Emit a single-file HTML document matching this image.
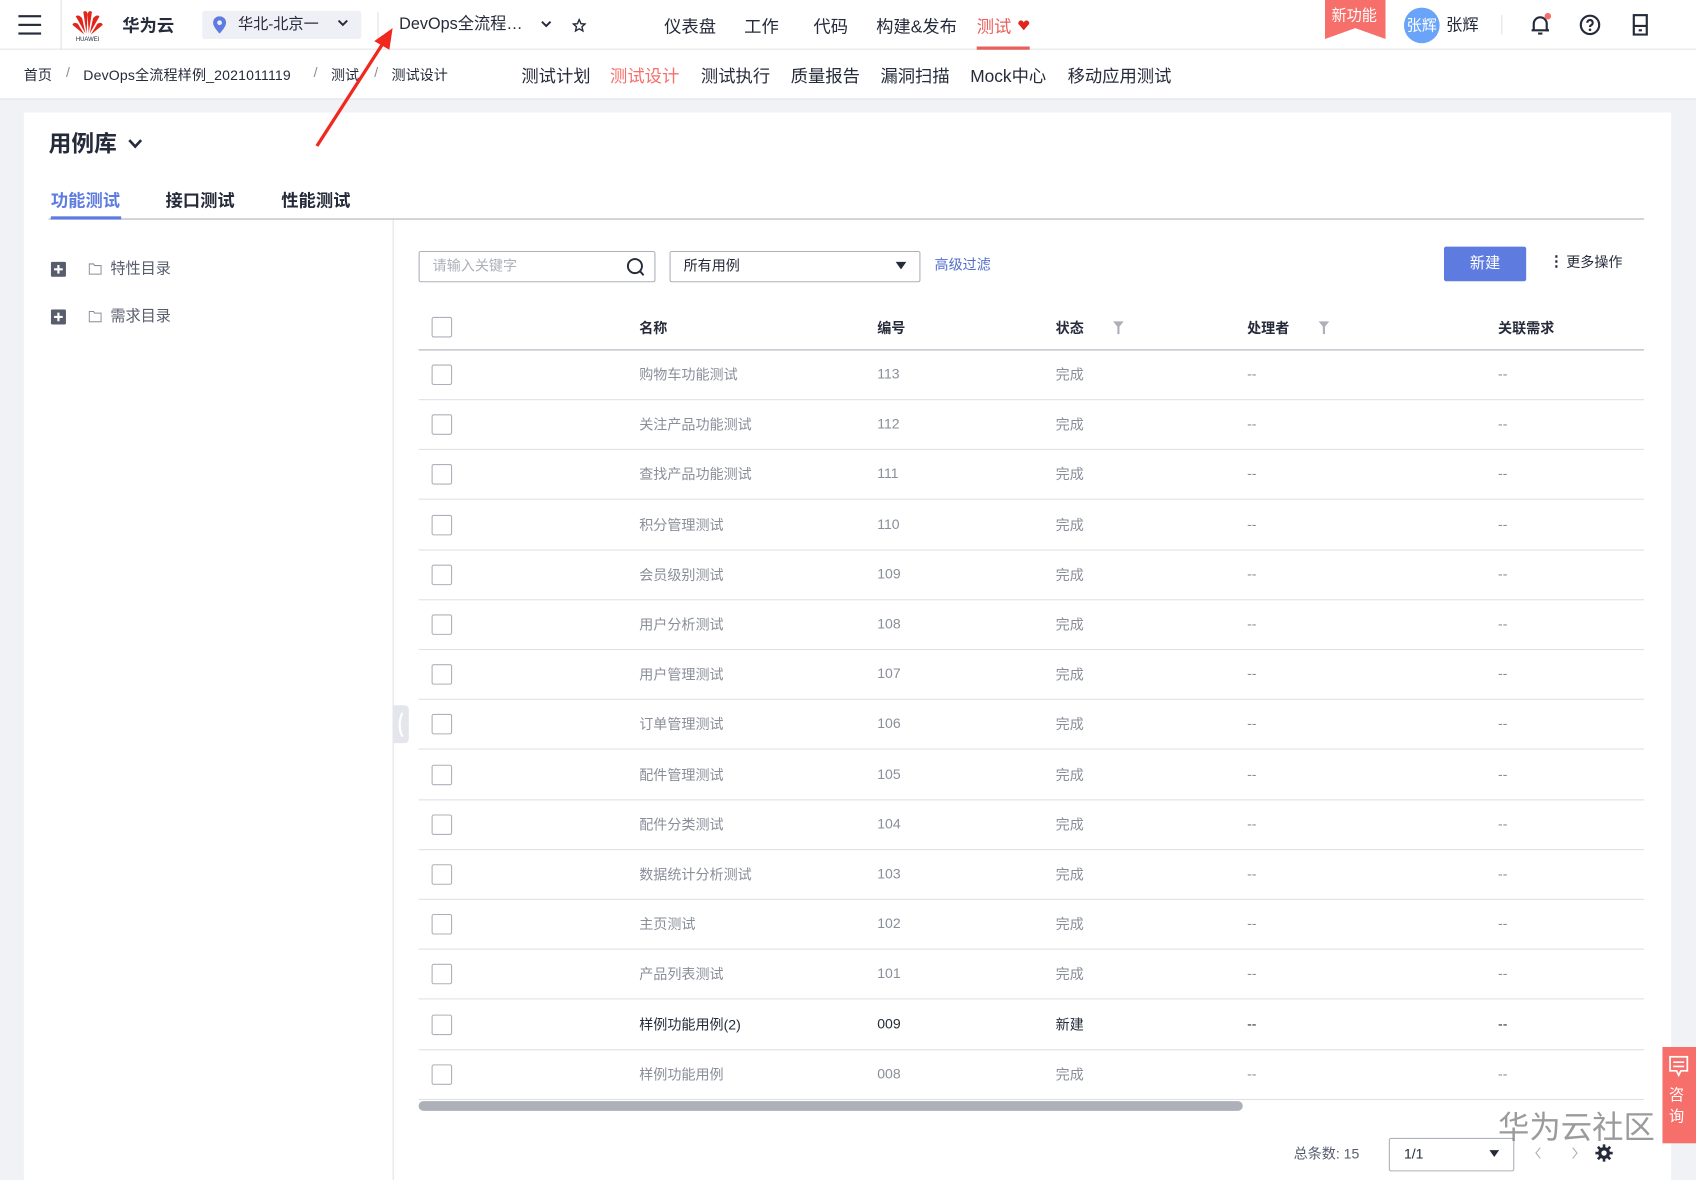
<!DOCTYPE html>
<html><head><meta charset="utf-8">
<style>
*{box-sizing:border-box;margin:0;padding:0}
html,body{width:1696px;height:1180px;overflow:hidden;background:#f0f2f5}
body{font-family:"Liberation Sans","Noto Sans CJK SC",sans-serif;color:#252b3a}
#w{position:absolute;left:0;top:0;width:1568px;height:1091px;transform:scale(1.08163);transform-origin:0 0;background:#f0f2f5;overflow:hidden}
.a{position:absolute;white-space:nowrap}
.top{position:absolute;left:0;top:0;width:1568px;height:46px;background:#fff;border-bottom:1px solid #dfe1e6}
.sub{position:absolute;left:0;top:46px;width:1568px;height:46px;background:#fff;border-bottom:1px solid #dfe1e6}
.card{position:absolute;left:22px;top:104px;width:1523px;height:1000px;background:#fff}
.nav{font-size:16px;color:#252b3a;top:11px}
.sn{font-size:16px;top:57px;color:#252b3a}
.bc{font-size:13px;top:59px;color:#252b3a}
.cb{position:absolute;left:399px;width:19px;height:19px;border:1px solid #adb0b8;border-radius:2px;background:#fff}
.row{position:absolute;left:387px;width:1133px;height:1px;background:#dfe1e6}
.c{position:absolute;font-size:13px;color:#8a8e99}
.h{position:absolute;font-size:13px;color:#252b3a;font-weight:bold;top:293px}
</style></head><body><div id="w">
<div class="top"></div>
<div class="sub"></div>
<div class="a" style="left:17px;top:14px;width:21px;height:2px;background:#252b3a"></div>
<div class="a" style="left:17px;top:22px;width:21px;height:2px;background:#252b3a"></div>
<div class="a" style="left:17px;top:30px;width:21px;height:2px;background:#252b3a"></div>
<div class="a" style="left:56px;top:0;width:1px;height:46px;background:#dfe1e6"></div>
<svg class="a" style="left:64px;top:5px" width="34" height="34" viewBox="0 0 34 34">
<g fill="#e1251b">
<path d="M16 26 L13 6 Q16 4 17 8 Z"/><path d="M18 26 L21 6 Q18 4 17 8 Z"/>
<path d="M15 26 L6 10 Q9 8 12 12 Z"/><path d="M19 26 L28 10 Q25 8 22 12 Z"/>
<path d="M14 27 L3 18 Q4 15 8 17 Z"/><path d="M20 27 L31 18 Q30 15 26 17 Z"/>
</g>
<text x="17" y="33" font-size="5.5" text-anchor="middle" fill="#252b3a" font-family="Liberation Sans">HUAWEI</text>
</svg>
<div class="a" style="left:113px;top:10px;font-size:16px;font-weight:bold">华为云</div>
<div class="a" style="left:187px;top:10px;width:147px;height:26px;background:#eef0f5;border-radius:2px"></div>
<svg class="a" style="left:197px;top:15px" width="12" height="16" viewBox="0 0 12 16"><path d="M6 0a6 6 0 0 0-6 6c0 4 6 10 6 10s6-6 6-10a6 6 0 0 0-6-6z" fill="#5e7ce0"/><circle cx="6" cy="6" r="2.2" fill="#eef0f5"/></svg>
<div class="a" style="left:220px;top:12px;font-size:14px">华北-北京一</div>
<svg class="a" style="left:312px;top:18px" width="10" height="8" viewBox="0 0 10 8"><path d="M1 1l4 4 4-4" stroke="#252b3a" stroke-width="1.8" fill="none"/></svg>
<div class="a" style="left:349px;top:11px;width:1px;height:24px;background:#dfe1e6"></div>
<div class="a" style="left:369px;top:11px;font-size:15px">DevOps全流程…</div>
<svg class="a" style="left:500px;top:19px" width="10" height="8" viewBox="0 0 10 8"><path d="M1 1l4 4 4-4" stroke="#252b3a" stroke-width="1.8" fill="none"/></svg>
<svg class="a" style="left:529px;top:17px" width="13" height="13" viewBox="0 0 24 24"><path d="M12 2l3 7 7 .6-5.3 4.7 1.6 7.2L12 17.8 5.7 21.5l1.6-7.2L2 9.6 9 9z" fill="none" stroke="#252b3a" stroke-width="2.4"/></svg>
<div class="a nav" style="left:614px">仪表盘</div>
<div class="a nav" style="left:688px">工作</div>
<div class="a nav" style="left:752px">代码</div>
<div class="a nav" style="left:810px">构建&amp;发布</div>
<div class="a nav" style="left:903px;color:#e8605a">测试</div>
<svg class="a" style="left:941px;top:19px" width="11" height="9" viewBox="0 0 12 10"><path d="M6 10L0.5 3.5A2.6 2.6 0 0 1 6 2a2.6 2.6 0 0 1 5.5 1.5z" fill="#e1251b"/></svg>
<div class="a" style="left:903px;top:43px;width:49px;height:3px;background:#e8605a"></div>
<svg class="a" style="left:1225px;top:0" width="56" height="36" viewBox="0 0 56 36"><path d="M0 0H56V36L28 26L0 36Z" fill="#f66f6a"/></svg>
<div class="a" style="left:1231px;top:4px;font-size:14px;color:#fff">新功能</div>
<div class="a" style="left:1298px;top:7px;width:33px;height:33px;border-radius:50%;background:#6aa4f8;color:#fff;font-size:14px;line-height:33px;text-align:center">张辉</div>
<div class="a" style="left:1337px;top:12px;font-size:15px">张辉</div>
<div class="a" style="left:1388px;top:14px;width:1px;height:18px;background:#dfe1e6"></div>
<svg class="a" style="left:1413px;top:12px" width="22" height="22" viewBox="0 0 22 22"><path d="M5 16V10a6 6 0 0 1 12 0v6h2" fill="none" stroke="#252b3a" stroke-width="2"/><path d="M3 16h16" stroke="#252b3a" stroke-width="2"/><path d="M9 19h4" stroke="#252b3a" stroke-width="2"/><circle cx="18" cy="3" r="3" fill="#f66f6a"/></svg>
<svg class="a" style="left:1460px;top:13px" width="20" height="20" viewBox="0 0 20 20"><circle cx="10" cy="10" r="8.5" fill="none" stroke="#252b3a" stroke-width="2"/><path d="M7.5 8a2.5 2.5 0 1 1 3.5 2.3c-.8.4-1 .9-1 1.7" fill="none" stroke="#252b3a" stroke-width="2"/><circle cx="10" cy="14.5" r="1.2" fill="#252b3a"/></svg>
<svg class="a" style="left:1509px;top:13px" width="15" height="20" viewBox="0 0 15 20"><rect x="1.5" y="1" width="12" height="18" fill="none" stroke="#252b3a" stroke-width="2"/><path d="M1.5 11h12" stroke="#252b3a" stroke-width="2"/><path d="M6 15h3" stroke="#252b3a" stroke-width="2"/></svg>
<div class="a bc" style="left:22px">首页</div>
<div class="a bc" style="left:61px;color:#8a8e99">/</div>
<div class="a bc" style="left:77px;letter-spacing:.15px">DevOps全流程样例_2021011119</div>
<div class="a bc" style="left:290px;color:#8a8e99">/</div>
<div class="a bc" style="left:306px">测试</div>
<div class="a bc" style="left:346px;color:#8a8e99">/</div>
<div class="a bc" style="left:362px">测试设计</div>
<div class="a sn" style="left:482px">测试计划</div>
<div class="a sn" style="left:564px;color:#f66f6a">测试设计</div>
<div class="a sn" style="left:648px">测试执行</div>
<div class="a sn" style="left:731px">质量报告</div>
<div class="a sn" style="left:814px">漏洞扫描</div>
<div class="a sn" style="left:897px">Mock中心</div>
<div class="a sn" style="left:987px">移动应用测试</div>
<div class="card"></div>
<div class="a" style="left:45px;top:117px;font-size:21px;font-weight:bold">用例库</div>
<svg class="a" style="left:118px;top:128px" width="14" height="10" viewBox="0 0 14 10"><path d="M1.5 1.5l5.5 6 5.5-6" stroke="#252b3a" stroke-width="2.4" fill="none"/></svg>
<div class="a" style="left:47px;top:172px;font-size:16px;font-weight:bold;color:#5e7ce0">功能测试</div>
<div class="a" style="left:153px;top:172px;font-size:16px;font-weight:bold">接口测试</div>
<div class="a" style="left:260px;top:172px;font-size:16px;font-weight:bold">性能测试</div>
<div class="a" style="left:45px;top:202px;width:1475px;height:1px;background:#adb0b8"></div>
<div class="a" style="left:47px;top:200px;width:65px;height:3px;background:#5e7ce0"></div>
<div class="a" style="left:363px;top:203px;width:1px;height:900px;background:#dfe1e6"></div>
<svg class="a" style="left:47px;top:242px" width="14" height="14" viewBox="0 0 14 14"><rect width="14" height="14" rx="1.5" fill="#575d6c"/><path d="M7 3v8M3 7h8" stroke="#fff" stroke-width="2"/></svg>
<svg class="a" style="left:82px;top:243px" width="12" height="11" viewBox="0 0 12 11"><path d="M.5 1h4l1 1.5h6v8h-11z" fill="none" stroke="#8a8e99"/></svg>
<div class="a" style="left:102px;top:238px;font-size:14px;color:#575d6c">特性目录</div>
<svg class="a" style="left:47px;top:286px" width="14" height="14" viewBox="0 0 14 14"><rect width="14" height="14" rx="1.5" fill="#575d6c"/><path d="M7 3v8M3 7h8" stroke="#fff" stroke-width="2"/></svg>
<svg class="a" style="left:82px;top:287px" width="12" height="11" viewBox="0 0 12 11"><path d="M.5 1h4l1 1.5h6v8h-11z" fill="none" stroke="#8a8e99"/></svg>
<div class="a" style="left:102px;top:282px;font-size:14px;color:#575d6c">需求目录</div>
<div class="a" style="left:363px;top:652px;width:15px;height:35px;background:#e4e6eb;border-radius:0 4px 4px 0"></div>
<svg class="a" style="left:366px;top:658px" width="8" height="24" viewBox="0 0 8 24"><path d="M6 1Q1 12 6 23" stroke="#fff" stroke-width="2" fill="none"/></svg>
<div class="a" style="left:387px;top:232px;width:219px;height:29px;border:1px solid #adb0b8;border-radius:2px"></div>
<div class="a" style="left:400px;top:235px;font-size:13px;color:#adb0b8">请输入关键字</div>
<svg class="a" style="left:579px;top:238px" width="17" height="18" viewBox="0 0 17 18"><circle cx="8" cy="8" r="6.5" fill="none" stroke="#252b3a" stroke-width="1.8"/><path d="M12.5 12.5l3.5 4" stroke="#252b3a" stroke-width="1.8"/></svg>
<div class="a" style="left:619px;top:232px;width:232px;height:29px;border:1px solid #adb0b8;border-radius:2px"></div>
<div class="a" style="left:632px;top:235px;font-size:13px">所有用例</div>
<svg class="a" style="left:828px;top:242px" width="10" height="7" viewBox="0 0 10 7"><path d="M0 0h10L5 7z" fill="#252b3a"/></svg>
<div class="a" style="left:864px;top:234px;font-size:13px;color:#526ecc">高级过滤</div>
<div class="a" style="left:1335px;top:228px;width:76px;height:32px;background:#5e7ce0;border-radius:2px;color:#fff;font-size:14px;line-height:30px;text-align:center">新建</div>
<div class="a" style="left:1432px;top:233px;font-size:14px;font-weight:bold">⋮</div>
<div class="a" style="left:1448px;top:232px;font-size:13px">更多操作</div>
<div class="cb" style="top:293px"></div>
<div class="h" style="left:591px">名称</div>
<div class="h" style="left:811px">编号</div>
<div class="h" style="left:976px">状态</div>
<svg class="a" style="left:1029px;top:297px" width="10" height="12" viewBox="0 0 10 12"><path d="M0 0h10L6 5v7H4V5z" fill="#adb0b8"/></svg>
<div class="h" style="left:1153px">处理者</div>
<svg class="a" style="left:1219px;top:297px" width="10" height="12" viewBox="0 0 10 12"><path d="M0 0h10L6 5v7H4V5z" fill="#adb0b8"/></svg>
<div class="h" style="left:1385px">关联需求</div>
<div class="row" style="top:323px;background:#adb0b8"></div>
<div id="rows"></div>
<script>
var d=[["购物车功能测试","113"],["关注产品功能测试","112"],["查找产品功能测试","111"],["积分管理测试","110"],["会员级别测试","109"],["用户分析测试","108"],["用户管理测试","107"],["订单管理测试","106"],["配件管理测试","105"],["配件分类测试","104"],["数据统计分析测试","103"],["主页测试","102"],["产品列表测试","101"],["样例功能用例(2)","009","新建"],["样例功能用例","008"]];
var h="";
d.forEach(function(r,i){var y=323+i*46.2;var dark=r[2];var st=dark?"color:#252b3a":"";
h+='<div class="cb" style="top:'+(y+14)+'px"></div>';
h+='<div class="c" style="left:591px;top:'+(y+13)+'px;'+st+'">'+r[0]+'</div>';
h+='<div class="c" style="left:811px;top:'+(y+15)+'px;'+st+'">'+r[1]+'</div>';
h+='<div class="c" style="left:976px;top:'+(y+13)+'px;'+st+'">'+(r[2]||"完成")+'</div>';
h+='<div class="c" style="left:1153px;top:'+(y+15)+'px;'+st+'">--</div>';
h+='<div class="c" style="left:1385px;top:'+(y+15)+'px;'+st+'">--</div>';
h+='<div class="row" style="top:'+(y+46)+'px"></div>';});
document.getElementById("rows").innerHTML=h;
</script>
<div class="a" style="left:387px;top:1018px;width:762px;height:9px;background:#adb0b8;border-radius:5px"></div>
<div class="a" style="left:1196px;top:1056px;font-size:13px;color:#575d6c">总条数: 15</div>
<div class="a" style="left:1284px;top:1052px;width:116px;height:31px;border:1px solid #adb0b8;border-radius:2px"></div>
<div class="a" style="left:1298px;top:1059px;font-size:13px">1/1</div>
<svg class="a" style="left:1377px;top:1063px" width="9" height="7" viewBox="0 0 10 7"><path d="M0 0h10L5 7z" fill="#252b3a"/></svg>
<svg class="a" style="left:1418px;top:1060px" width="8" height="12" viewBox="0 0 8 12"><path d="M6 1L2 6l4 5" stroke="#adb0b8" fill="none"/></svg>
<svg class="a" style="left:1452px;top:1060px" width="8" height="12" viewBox="0 0 8 12"><path d="M2 1l4 5-4 5" stroke="#adb0b8" fill="none"/></svg>
<svg class="a" style="left:1474px;top:1057px" width="18" height="18" viewBox="0 0 18 18"><g stroke="#252b3a" stroke-width="2.4"><path d="M9 1v16M1 9h16M3.3 3.3l11.4 11.4M14.7 3.3L3.3 14.7"/></g><circle cx="9" cy="9" r="5.5" fill="#252b3a"/><circle cx="9" cy="9" r="2.5" fill="#fff"/></svg>
<div class="a" style="left:1385px;top:1019px;font-size:29px;color:#8a8a8a;opacity:.85">华为云社区</div>
<div class="a" style="left:1537px;top:968px;width:31px;height:89px;background:#f66f6a"></div>
<svg class="a" style="left:1543px;top:976px" width="18" height="20" viewBox="0 0 18 20"><path d="M1 1h16v13h-6l-2 4-2-4H1z" fill="none" stroke="#fff" stroke-width="1.6"/><path d="M4 6h10M4 10h10" stroke="#fff" stroke-width="1.5"/></svg>
<div class="a" style="left:1543px;top:1002px;font-size:14px;color:#fff;line-height:20px;white-space:normal;width:16px">咨询</div>
<svg class="a" style="left:280px;top:18px" width="100" height="125" viewBox="0 0 100 125"><path d="M13 117L78 16" stroke="#f0281e" stroke-width="3"/><path d="M83 8L66 20L80 28Z" fill="#f0281e"/></svg>
</div></body></html>
